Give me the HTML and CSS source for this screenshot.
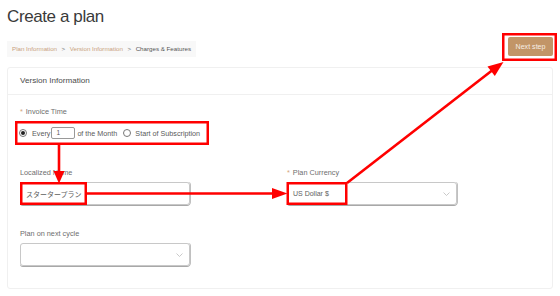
FILE: index.html
```html
<!DOCTYPE html>
<html>
<head>
    <meta charset="UTF-8">
    <title>Create a plan</title>
    <link rel="stylesheet" href="styles.css">
</head>
<body>
    <div class="page">
        <h1 class="title">Create a plan</h1>

        <div class="toolbar">
            <nav class="crumbs">
                <span class="crumb done">Plan Information</span>
                <span class="sep">&gt;</span>
                <span class="crumb done">Version Information</span>
                <span class="sep">&gt;</span>
                <span class="crumb">Charges &amp; Features</span>
            </nav>
            <button class="next-btn">Next step</button>
        </div>

        <section class="card">
            <header class="card-head">Version Information</header>
            <div class="card-body">
                <div class="field">
                    <div class="label req">Invoice Time</div>
                    <div class="radio-row">
                        <span class="radio checked"></span>
                        <span class="opt">Every</span>
                        <span class="num-input">1</span>
                        <span class="opt">of the Month</span>
                        <span class="radio second"></span>
                        <span class="opt">Start of Subscription</span>
                    </div>
                </div>

                <div class="grid">
                    <div class="field">
                        <div class="label">Localized Name</div>
                        <div class="input">スタータープラン</div>
                    </div>
                    <div class="field">
                        <div class="label req">Plan Currency</div>
                        <div class="input select">
                            <span>US Dollar $</span>
                            <svg class="chev" width="7" height="4" viewBox="0 0 7 4"><polyline points="0.5,0.5 3.5,3.5 6.5,0.5" /></svg>
                        </div>
                    </div>
                    <div class="field">
                        <div class="label">Plan on next cycle</div>
                        <div class="input select">
                            <span></span>
                            <svg class="chev" width="7" height="4" viewBox="0 0 7 4"><polyline points="0.5,0.5 3.5,3.5 6.5,0.5" /></svg>
                        </div>
                    </div>
                </div>
            </div>
        </section>

        <!-- annotation overlay -->
        <svg class="notes" width="560" height="296" viewBox="0 0 560 296">
            <g class="box">
                <rect x="503.25" y="34.25" width="52.5" height="25.5" />
                <rect x="16.25" y="122.25" width="191.5" height="21.5" />
                <rect x="21.25" y="183.25" width="64.5" height="20.5" />
                <rect x="287.75" y="183.25" width="58.5" height="20.5" />
            </g>
            <g class="arrow">
                <line x1="59" y1="145" x2="59" y2="172" />
                <line x1="87" y1="193.5" x2="273" y2="193.5" />
                <line x1="347" y1="183" x2="492" y2="70.5" />
            </g>
            <g class="head">
                <polygon points="53.5,171 64.5,171 59,183.5" />
                <polygon points="272,188 287.5,193.5 272,199" />
                <polygon points="503.5,62 494.8,75.9 487.5,66.5" />
            </g>
        </svg>
    </div>
</body>
</html>
```

FILE: styles.css
```css
body {
    margin: 0;
    font-family: 'Liberation Sans', Arial, 'Noto Sans CJK JP', sans-serif;
    background: #fff;
    color: #555;
}

.page {
    position: relative;
    width: 560px;
    height: 296px;
    padding: 0 7px;
    box-sizing: border-box;
    overflow: hidden;
}

.title {
    margin: 7px 0 0;
    font-size: 17px;
    line-height: 20px;
    font-weight: normal;
    letter-spacing: -0.4px;
    color: #3a3a3a;
}

.toolbar {
    display: flex;
    justify-content: space-between;
    height: 20px;
    margin-top: 10px;
}

.crumbs {
    align-self: flex-end;
    height: 16px;
    line-height: 16px;
    padding: 0 5px;
    background: #f8f8f8;
    font-size: 6.2px;
    color: #555;
    display: flex;
}

.crumb.done {
    color: #c9a27e;
}

.sep {
    margin: 0 4.5px;
    color: #777;
}

.next-btn {
    align-self: flex-start;
    height: 19px;
    padding: 0 7.5px;
    border: none;
    border-radius: 2px;
    background: #c29567;
    color: #f6eee6;
    font-family: inherit;
    font-size: 7.1px;
    cursor: pointer;
}

.card {
    margin-top: 10px;
    border: 1px solid #f0f0f0;
    border-radius: 3px;
}

.card-head {
    height: 26px;
    line-height: 26px;
    padding: 0 12px;
    border-bottom: 1px solid #f0f0f0;
    font-size: 8.1px;
    color: #4a4a4a;
}

.card-body {
    padding: 12px 12px 22px;
}

.label {
    height: 10px;
    line-height: 10px;
    font-size: 7.3px;
    color: #6e6e6e;
    margin-bottom: 4px;
}

.label.req::before {
    content: "*";
    color: #d4a47c;
    margin-right: 3px;
}

.radio-row {
    display: flex;
    align-items: center;
    height: 20px;
    margin-top: 6px;
    font-size: 7.2px;
    color: #5a5a5a;
}

.radio {
    width: 8px;
    height: 8px;
    box-sizing: border-box;
    border: 1px solid #777;
    border-radius: 50%;
    margin-left: -1px;
    margin-right: 5px;
    display: flex;
    align-items: center;
    justify-content: center;
}

.radio.checked::after {
    content: "";
    width: 4px;
    height: 4px;
    border-radius: 50%;
    background: #222;
}

.radio.second {
    margin-left: 6px;
    margin-right: 4px;
}

.num-input {
    width: 24px;
    height: 12px;
    line-height: 10px;
    box-sizing: border-box;
    margin: 0 2px 0 1px;
    padding-left: 4px;
    border: 1px solid #999;
    border-radius: 2px;
    font-size: 6.5px;
}

.grid {
    display: grid;
    grid-template-columns: 1fr 1fr;
    column-gap: 14px;
    row-gap: 24px;
    margin-top: 25px;
}

.input {
    width: 170px;
    height: 23px;
    box-sizing: border-box;
    padding: 0 5px;
    border: 1px solid #c8c8c8;
    border-radius: 3px;
    box-shadow: 0 1px 0 #a8a8a8, 1px 0 0 #c0c0c0;
    display: flex;
    align-items: center;
    font-size: 7px;
    color: #5e5e5e;
}

.select {
    justify-content: space-between;
    padding-right: 6px;
}

.chev polyline {
    fill: none;
    stroke: #bdbdbd;
    stroke-width: 0.8;
}

.notes {
    position: absolute;
    left: 0;
    top: 0;
    pointer-events: none;
}

.notes .box rect {
    fill: none;
    stroke: #ff0000;
    stroke-width: 2.5;
}

.notes .arrow line {
    stroke: #ff0000;
    stroke-width: 2.6;
}

.notes .head polygon {
    fill: #ff0000;
}
```
